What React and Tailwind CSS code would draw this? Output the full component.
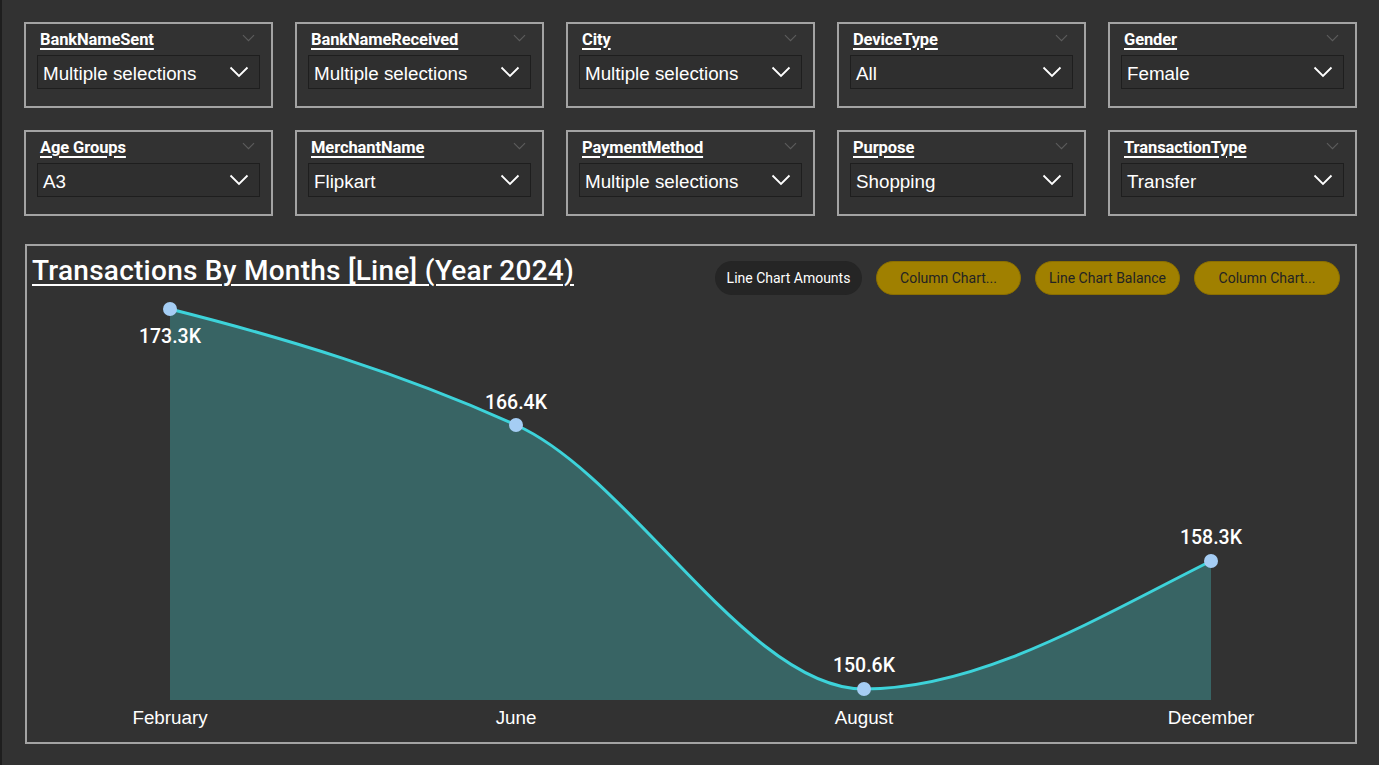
import React from "react";

const slicersTop = [
  { title: "BankNameSent", value: "Multiple selections" },
  { title: "BankNameReceived", value: "Multiple selections" },
  { title: "City", value: "Multiple selections" },
  { title: "DeviceType", value: "All" },
  { title: "Gender", value: "Female" },
];

const slicersBottom = [
  { title: "Age Groups", value: "A3" },
  { title: "MerchantName", value: "Flipkart" },
  { title: "PaymentMethod", value: "Multiple selections" },
  { title: "Purpose", value: "Shopping" },
  { title: "TransactionType", value: "Transfer" },
];

const points = [
  { month: "February", label: "173.3K", x: 143, y: 9, ly: 43 },
  { month: "June", label: "166.4K", x: 489, y: 125, ly: 109 },
  { month: "August", label: "150.6K", x: 837, y: 389, ly: 372 },
  { month: "December", label: "158.3K", x: 1184, y: 261, ly: 244 },
];

const linePath =
  "M143,9 C258,38 374,73 489,125 C605,177 721,389 837,389 C953,389 1068,319 1184,261";

const Chevron = ({ className }) => (
  <svg viewBox="0 0 20 12" className={className} fill="none" stroke="currentColor" strokeWidth="1.8">
    <path d="M1.5 1.5 L10 10 L18.5 1.5" />
  </svg>
);

const Slicer = ({ title, value }) => (
  <div className="relative h-[86px] border-2 border-[#a3a3a3] px-[11px] pt-[3px]">
    <div className="flex items-center justify-between pl-[3px] pr-[5px] h-[26px]">
      <span className="font-['Roboto'] font-bold text-[16.5px] tracking-[-0.1px] text-white underline underline-offset-[3px] decoration-[1.5px]">
        {title}
      </span>
      <Chevron className="w-[13px] h-[8px] text-[#5c5c5c] -mt-[4px]" />
    </div>
    <div className="mt-[2px] h-[34px] border border-[#1e1e1e] bg-[#2f2f2f] flex items-center justify-between pl-[5px] pr-[10px]">
      <span className="font-['Liberation_Sans'] text-[18.8px] text-white pt-[4px]">{value}</span>
      <Chevron className="w-[20px] h-[12px] text-white" />
    </div>
  </div>
);

export default function App() {
  return (
    <div className="w-[1379px] h-[765px] bg-[#323232] border-l-2 border-[#1e1e1e] overflow-hidden">
      <div className="pl-[22px] pr-[20px] pt-[22px]">
        <div className="grid grid-cols-5 gap-x-[22px] w-[1333px]">
          {slicersTop.map((s) => (
            <Slicer key={s.title} {...s} />
          ))}
        </div>
        <div className="grid grid-cols-5 gap-x-[22px] w-[1333px] mt-[22px]">
          {slicersBottom.map((s) => (
            <Slicer key={s.title} {...s} />
          ))}
        </div>

        <div className="mt-[28px] ml-[1px] w-[1332px] h-[500px] border-2 border-[#a3a3a3] flex flex-col">
          <div className="h-[54px] flex items-start justify-between pl-[5px] pr-[15px]">
            <h1 className="mt-[4px] font-['Roboto'] font-medium text-[28px] text-white underline underline-offset-[4px] decoration-2 tracking-[0.25px]">
              Transactions By Months [Line] (Year 2024)
            </h1>
            <div className="flex gap-[14px] mt-[15px] font-['Roboto'] text-[14px]">
              <button className="w-[147px] h-[34px] rounded-full bg-[#252525] text-white">
                Line Chart Amounts
              </button>
              <button className="w-[145px] h-[34px] rounded-full bg-[#a08000] text-[#232323] border border-[#8a6e00]">
                Column Chart...
              </button>
              <button className="w-[145px] h-[34px] rounded-full bg-[#a08000] text-[#232323] border border-[#8a6e00]">
                Line Chart Balance
              </button>
              <button className="w-[146px] h-[34px] rounded-full bg-[#a08000] text-[#232323] border border-[#8a6e00]">
                Column Chart...
              </button>
            </div>
          </div>

          <svg width="1328" height="442" viewBox="0 0 1328 442" className="block">
            <path d={`${linePath} L1184,400 L143,400 Z`} fill="#386464" />
            <path d={linePath} fill="none" stroke="#3dd3da" strokeWidth="3" />
            {points.map((p) => (
              <g key={p.month}>
                <circle cx={p.x} cy={p.y} r="7" fill="#a5cdf4" />
                <text
                  x={p.x}
                  y={p.ly}
                  textAnchor="middle"
                  fill="#ffffff"
                  fontFamily="Roboto"
                  fontWeight="500"
                  fontSize="19.5"
                >
                  {p.label}
                </text>
                <text
                  x={p.x}
                  y={424}
                  textAnchor="middle"
                  fill="#ffffff"
                  fontFamily="Liberation Sans"
                  fontSize="18.8"
                >
                  {p.month}
                </text>
              </g>
            ))}
          </svg>
        </div>
      </div>
    </div>
  );
}
